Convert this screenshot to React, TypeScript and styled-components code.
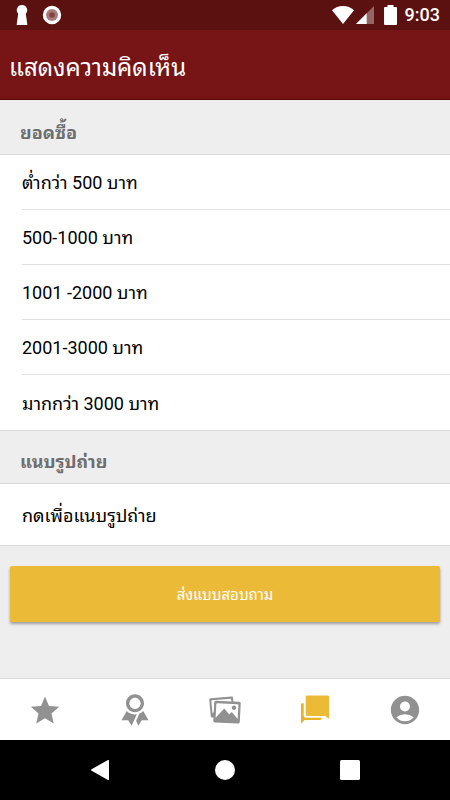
import React from "react";
import styled, { createGlobalStyle } from "styled-components";
import { IoMdStar, IoMdRibbon, IoMdImages } from "react-icons/io";
import { MdAccountCircle } from "react-icons/md";

const Global = createGlobalStyle`
  * { box-sizing: border-box; }
  body {
    margin: 0;
    background: #eeeeee;
    font-family: Roboto, "Noto Sans Thai Looped", "Noto Sans", sans-serif;
  }
  svg { display: block; }
`;

const Screen = styled.div`
  display: flex;
  flex-direction: column;
  min-height: 100vh;
`;

const StatusBar = styled.div`
  display: flex;
  align-items: center;
  justify-content: space-between;
  height: 30px;
  padding: 0 10px 0 16px;
  background: #5c1111;
  color: #fff;
`;

const StatusGroup = styled.div<{ $gap: number }>`
  display: flex;
  align-items: center;
  gap: ${(p) => p.$gap}px;
`;

const Clock = styled.time`
  font-size: 18px;
  line-height: 20px;
  font-weight: 500;
`;

const AppBar = styled.header`
  display: flex;
  align-items: center;
  height: 70px;
  padding: 6px 9px 0;
  background: #761416;
  border-bottom: 1px solid #5c0507;
`;

const Title = styled.h1`
  margin: 0;
  color: #fff;
  font-size: 24px;
  line-height: 36px;
  font-weight: 400;
`;

const Content = styled.main`
  flex: 1;
`;

const SectionTitle = styled.h2<{ $first?: boolean }>`
  margin: 0;
  padding: ${(p) => (p.$first ? 20 : 18)}px 20px 8px;
  font-size: 18px;
  line-height: 26px;
  font-weight: 700;
  color: #6e6e6e;
`;

const List = styled.ul`
  margin: 0;
  padding: 0;
  list-style: none;
  background: #fff;
  border-top: 1px solid #d9d9d9;
  border-bottom: 1px solid #d9d9d9;
`;

const Item = styled.li`
  margin-left: 22px;

  &:not(:last-child) {
    border-bottom: 1px solid #e0e0e0;
  }
`;

const Option = styled.button<{ $tall?: boolean }>`
  display: block;
  width: 100%;
  height: ${(p) => (p.$tall ? 61 : 54)}px;
  padding: 2px 22px 0 0;
  border: 0;
  background: none;
  text-align: left;
  font: inherit;
  font-size: 18px;
  line-height: 26px;
  color: #000;

  ${Item}:last-child:not(:first-child) > & {
    height: 55px;
  }
`;

const SubmitRow = styled.div`
  padding: 20px 10px;
`;

const Submit = styled.button`
  width: 100%;
  height: 56px;
  padding-top: 2px;
  border: 0;
  border-radius: 2px;
  background: #ebbb38;
  color: #fff;
  font: inherit;
  font-size: 15px;
  line-height: 24px;
  box-shadow: 0 2px 3px rgba(0, 0, 0, 0.35);
`;

const Tabs = styled.nav`
  display: grid;
  grid-template-columns: repeat(5, 1fr);
  height: 62px;
  background: #fff;
  border-top: 1px solid #d9d9d9;
`;

const Tab = styled.a<{ $active?: boolean }>`
  display: flex;
  align-items: center;
  justify-content: center;
  color: ${(p) => (p.$active ? "#ebbb38" : "#919191")};
`;

const SystemNav = styled.nav`
  display: grid;
  grid-template-columns: repeat(3, 1fr);
  height: 60px;
  padding: 0 38px;
  background: #000;
`;

const SystemButton = styled.button`
  display: flex;
  align-items: center;
  justify-content: center;
  padding: 0;
  border: 0;
  background: none;
  color: #fff;
`;

const KeyholeIcon = () => (
  <svg width="12" height="20" viewBox="0 0 12 20" fill="#fff" aria-hidden="true">
    <path d="M6 0a5.2 5.2 0 0 1 3.8 8.8L11.4 20H.6L2.200 8.8A5.2 5.2 0 0 1 6 0Z" />
  </svg>
);

const RecordIcon = () => (
  <svg width="20" height="20" viewBox="0 0 20 20" aria-hidden="true">
    <circle cx="10" cy="10" r="9.2" fill="#fff" />
    <circle cx="10" cy="10" r="6" fill="#ab7b7b" />
    <circle cx="10" cy="10" r="2.8" fill="#844343" />
  </svg>
);

const WifiIcon = () => (
  <svg width="22" height="18" viewBox="0 0 22 18" fill="#fff" aria-hidden="true">
    <path d="M11 18 0 4.2C3 1.6 6.8 0 11 0s8 1.6 11 4.2Z" />
  </svg>
);

const SignalIcon = () => (
  <svg width="18" height="18" viewBox="0 0 18 18" fill="#fff" aria-hidden="true">
    <path d="M18 0v18H0Z" opacity="0.35" />
    <path d="M10.7 7.3V18H0Z" />
  </svg>
);

const BatteryIcon = () => (
  <svg width="13" height="20" viewBox="0 0 13 20" fill="#fff" aria-hidden="true">
    <path d="M3.500 0h6v2H12a1 1 0 0 1 1 1v16a1 1 0 0 1-1 1H1a1 1 0 0 1-1-1V3a1 1 0 0 1 1-1h2.500Z" />
  </svg>
);

const ChatIcon = () => (
  <svg width="28" height="29" viewBox="0 0 28 29" aria-hidden="true">
    <path
      d="M6.1.4H26.6A1.4 1.4 0 0 1 28 1.8V24L24.2 21H6.1a1.4 1.4 0 0 1-1.4-1.4V1.8A1.4 1.4 0 0 1 6.1.4Z"
      fill="#ebbb38"
    />
    <path
      d="M0 28.8V9.6A1.4 1.4 0 0 1 1.4 8.2H2.7V20.8A2 2 0 0 0 4.7 22.8H20.8L20 24.4A1.3 1.3 0 0 1 18.8 25.1H3.7Z"
      fill="#e9b324"
    />
  </svg>
);

const OPTIONS = [
  "ต่ำกว่า 500 บาท",
  "500-1000 บาท",
  "1001 -2000 บาท",
  "2001-3000 บาท",
  "มากกว่า 3000 บาท",
];

export default function App() {
  return (
    <Screen>
      <Global />
      <StatusBar>
        <StatusGroup $gap={14}>
          <KeyholeIcon />
          <RecordIcon />
        </StatusGroup>
        <StatusGroup $gap={10}>
          <StatusGroup $gap={2}>
            <WifiIcon />
            <SignalIcon />
          </StatusGroup>
          <StatusGroup $gap={8}>
            <BatteryIcon />
            <Clock>9:03</Clock>
          </StatusGroup>
        </StatusGroup>
      </StatusBar>
      <AppBar>
        <Title>แสดงความคิดเห็น</Title>
      </AppBar>
      <Content>
        <SectionTitle $first>ยอดซื้อ</SectionTitle>
        <List>
          {OPTIONS.map((label) => (
            <Item key={label}>
              <Option type="button">{label}</Option>
            </Item>
          ))}
        </List>
        <SectionTitle>แนบรูปถ่าย</SectionTitle>
        <List>
          <Item>
            <Option type="button" $tall>
              กดเพื่อแนบรูปถ่าย
            </Option>
          </Item>
        </List>
        <SubmitRow>
          <Submit type="button">ส่งแบบสอบถาม</Submit>
        </SubmitRow>
      </Content>
      <Tabs>
        <Tab href="#favorites" aria-label="Favorites">
          <IoMdStar size={36} />
        </Tab>
        <Tab href="#rewards" aria-label="Rewards">
          <IoMdRibbon size={36} />
        </Tab>
        <Tab href="#photos" aria-label="Photos">
          <IoMdImages size={36} />
        </Tab>
        <Tab href="#feedback" aria-label="Feedback" aria-current="page" $active>
          <ChatIcon />
        </Tab>
        <Tab href="#account" aria-label="Account">
          <MdAccountCircle size={34} />
        </Tab>
      </Tabs>
      <SystemNav>
        <SystemButton type="button" aria-label="Back">
          <svg width="18" height="20" viewBox="0 0 18 20" fill="currentColor" aria-hidden="true">
            <path d="M.6 9.2 16.5.2A1 1 0 0 1 18 1v18a1 1 0 0 1-1.5.8L.6 10.8a.9.9 0 0 1 0-1.6Z" />
          </svg>
        </SystemButton>
        <SystemButton type="button" aria-label="Home">
          <svg width="20" height="20" viewBox="0 0 20 20" fill="currentColor" aria-hidden="true">
            <circle cx="10" cy="10" r="10" />
          </svg>
        </SystemButton>
        <SystemButton type="button" aria-label="Recent apps">
          <svg width="20" height="20" viewBox="0 0 20 20" fill="currentColor" aria-hidden="true">
            <rect width="20" height="20" rx="1.5" />
          </svg>
        </SystemButton>
      </SystemNav>
    </Screen>
  );
}
